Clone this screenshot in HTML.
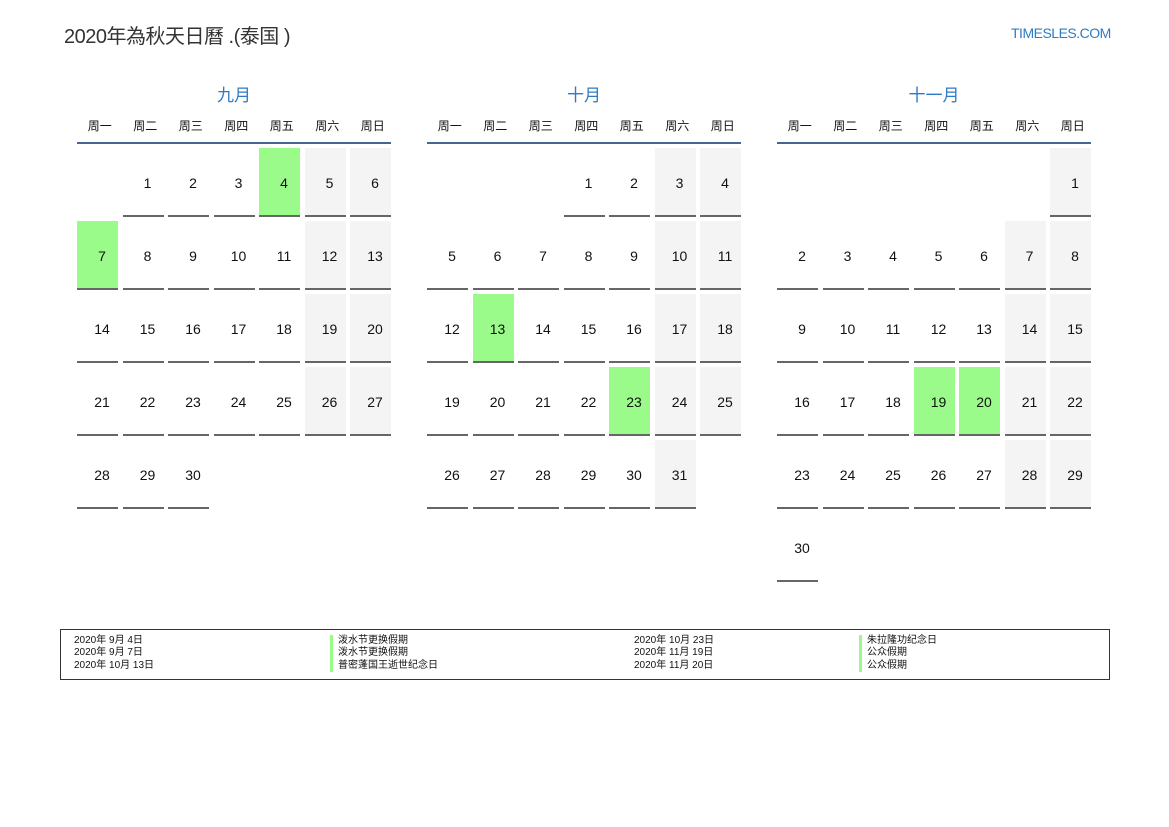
<!DOCTYPE html>
<html><head><meta charset="utf-8"><style>
*{margin:0;padding:0;box-sizing:border-box}
body{width:1169px;height:827px;background:#fff;position:relative;overflow:hidden;font-family:"Liberation Sans","Noto Sans CJK SC",sans-serif;color:#111}
.title{position:absolute;left:64px;top:20px;font-size:20px;color:#333;letter-spacing:-0.5px}
.site{position:absolute;left:1011px;top:25px;font-size:14px;color:#2d7bc4;letter-spacing:-0.5px}
.m{position:absolute;top:84px;width:314px}
.mt{text-align:center;font-size:17px;color:#2d7bc4;height:26px;line-height:24px}
.wd{display:grid;grid-template-columns:repeat(7,45.5px);font-size:12px;height:20px;padding-top:9px;line-height:14px}
.wd div{text-align:center}
.hl{margin-top:12px;height:2px;background:#456691}
.g{position:absolute;top:64px;left:0;display:grid;grid-template-columns:repeat(7,41px);column-gap:4.5px;grid-auto-rows:69px;row-gap:4px}
.g div{border-bottom:2px solid #666;font-size:14px;text-align:center;padding-left:9px;line-height:70px}
.g div.e{border:none}
.g div.w{background:#f4f4f4}
.g div.h{background:#9afa8a}
.lg{position:absolute;left:60px;top:629px;width:1050px;height:51px;border:1px solid #333;font-size:10px;line-height:12.3px}
.col{position:absolute;top:5px}
.bar{border-left:3px solid #9afa8a;padding-left:5px}
</style></head><body>
<div class="title">2020年為秋天日曆 .(泰国 )</div>
<div class="site">TIMESLES.COM</div>

<div class="m" style="left:77px">
<div class="mt">九月</div>
<div class="wd"><div>周一</div><div>周二</div><div>周三</div><div>周四</div><div>周五</div><div>周六</div><div>周日</div></div>
<div class="hl"></div>
<div class="g">
<div class="e"></div><div>1</div><div>2</div><div>3</div><div class="h">4</div><div class="w">5</div><div class="w">6</div>
<div class="h">7</div><div>8</div><div>9</div><div>10</div><div>11</div><div class="w">12</div><div class="w">13</div>
<div>14</div><div>15</div><div>16</div><div>17</div><div>18</div><div class="w">19</div><div class="w">20</div>
<div>21</div><div>22</div><div>23</div><div>24</div><div>25</div><div class="w">26</div><div class="w">27</div>
<div>28</div><div>29</div><div>30</div>
</div></div>

<div class="m" style="left:427px">
<div class="mt">十月</div>
<div class="wd"><div>周一</div><div>周二</div><div>周三</div><div>周四</div><div>周五</div><div>周六</div><div>周日</div></div>
<div class="hl"></div>
<div class="g">
<div class="e"></div><div class="e"></div><div class="e"></div><div>1</div><div>2</div><div class="w">3</div><div class="w">4</div>
<div>5</div><div>6</div><div>7</div><div>8</div><div>9</div><div class="w">10</div><div class="w">11</div>
<div>12</div><div class="h">13</div><div>14</div><div>15</div><div>16</div><div class="w">17</div><div class="w">18</div>
<div>19</div><div>20</div><div>21</div><div>22</div><div class="h">23</div><div class="w">24</div><div class="w">25</div>
<div>26</div><div>27</div><div>28</div><div>29</div><div>30</div><div class="w">31</div>
</div></div>

<div class="m" style="left:777px">
<div class="mt">十一月</div>
<div class="wd"><div>周一</div><div>周二</div><div>周三</div><div>周四</div><div>周五</div><div>周六</div><div>周日</div></div>
<div class="hl"></div>
<div class="g">
<div class="e"></div><div class="e"></div><div class="e"></div><div class="e"></div><div class="e"></div><div class="e"></div><div class="w">1</div>
<div>2</div><div>3</div><div>4</div><div>5</div><div>6</div><div class="w">7</div><div class="w">8</div>
<div>9</div><div>10</div><div>11</div><div>12</div><div>13</div><div class="w">14</div><div class="w">15</div>
<div>16</div><div>17</div><div>18</div><div class="h">19</div><div class="h">20</div><div class="w">21</div><div class="w">22</div>
<div>23</div><div>24</div><div>25</div><div>26</div><div>27</div><div class="w">28</div><div class="w">29</div>
<div>30</div>
</div></div>

<div class="lg">
<div class="col" style="left:13px">2020年 9月 4日<br>2020年 9月 7日<br>2020年 10月 13日</div>
<div class="col" style="left:269px"><div class="bar">泼水节更换假期</div><div class="bar">泼水节更换假期</div><div class="bar">普密蓬国王逝世纪念日</div></div>
<div class="col" style="left:573px">2020年 10月 23日<br>2020年 11月 19日<br>2020年 11月 20日</div>
<div class="col" style="left:798px"><div class="bar">朱拉隆功纪念日</div><div class="bar">公众假期</div><div class="bar">公众假期</div></div>
</div>
</body></html>
